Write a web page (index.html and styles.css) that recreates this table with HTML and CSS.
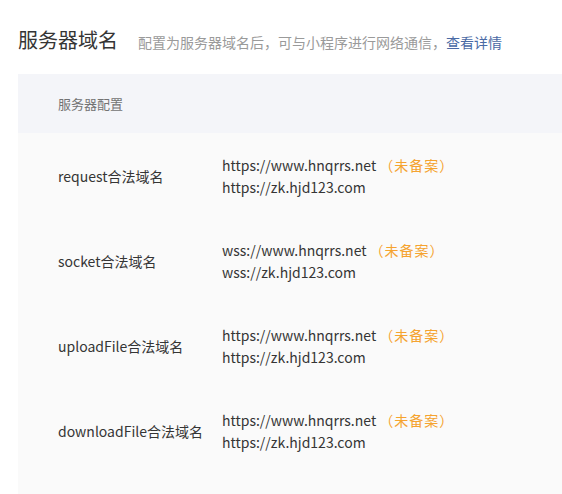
FILE: index.html
```html
<!DOCTYPE html>
<html lang="zh">
<head>
<meta charset="utf-8">
<link rel="stylesheet" href="styles.css">
</head>
<body>
<div class="head">
  <h1 class="title">服务器域名</h1>
  <p class="desc">配置为服务器域名后，可与小程序进行网络通信，<a class="link" href="#">查看详情</a></p>
</div>
<section class="panel">
  <div class="panel-hd">服务器配置</div>
  <div class="panel-bd">
    <div class="row">
      <div class="label">request合法域名</div>
      <div class="values">
        <div>https://www.hnqrrs.net<span class="tag">（未备案）</span></div>
        <div>https://zk.hjd123.com</div>
      </div>
    </div>
    <div class="row">
      <div class="label">socket合法域名</div>
      <div class="values">
        <div>wss://www.hnqrrs.net<span class="tag">（未备案）</span></div>
        <div>wss://zk.hjd123.com</div>
      </div>
    </div>
    <div class="row">
      <div class="label">uploadFile合法域名</div>
      <div class="values">
        <div>https://www.hnqrrs.net<span class="tag">（未备案）</span></div>
        <div>https://zk.hjd123.com</div>
      </div>
    </div>
    <div class="row">
      <div class="label">downloadFile合法域名</div>
      <div class="values">
        <div>https://www.hnqrrs.net<span class="tag">（未备案）</span></div>
        <div>https://zk.hjd123.com</div>
      </div>
    </div>
  </div>
</section>
</body>
</html>
```
FILE: styles.css
```css
html, body {
  margin: 0;
  padding: 0;
  background: #fff;
  font-family: "Noto Sans CJK SC", "Noto Sans", sans-serif;
  color: #353535;
}
.head {
  display: flex;
  align-items: baseline;
  padding: 27px 0 0 18px;
  height: 47px;
  box-sizing: border-box;
}
.title {
  margin: 0;
  font-size: 20px;
  font-weight: normal;
  color: #353535;
  line-height: 26px;
}
.desc {
  margin: 0 0 0 20px;
  font-size: 14px;
  color: #9a9a9a;
  line-height: 20px;
}
.link {
  color: #4a6aa5;
  text-decoration: none;
}
.panel {
  margin: 27px 0 0 18px;
  background: #fafafa;
  height: 420px;
}
.panel-hd {
  background: #f4f5f9;
  height: 59px;
  line-height: 59px;
  padding-left: 40px;
  font-size: 13px;
  color: #737373;
}
.row {
  display: flex;
  align-items: center;
  height: 85px;
  font-size: 14px;
  color: #353535;
}
.label {
  width: 164px;
  padding-left: 40px;
  flex: none;
}
.values {
  line-height: 22px;
}
.tag {
  color: #f5a32f;
  margin-left: 3px;
  letter-spacing: 1px;
}
```
